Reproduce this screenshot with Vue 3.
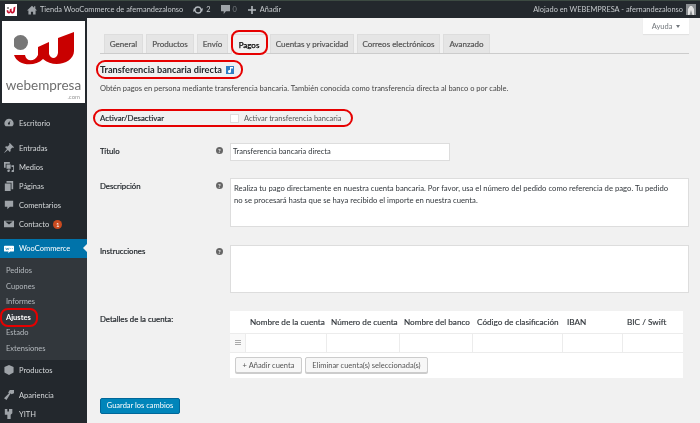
<script setup>
const tabs = [
  { label: 'General', w: 39 }, { label: 'Productos', w: 48 }, { label: 'Envío', w: 31 },
  { label: 'Pagos', w: 36, active: true }, { label: 'Cuentas y privacidad', w: 84 },
  { label: 'Correos electrónicos', w: 83 }, { label: 'Avanzado', w: 47 }
]
const columns = [
  { label: 'Nombre de la cuenta', w: 81 }, { label: 'Número de cuenta', w: 73 },
  { label: 'Nombre del banco', w: 73 }, { label: 'Código de clasificación', w: 90 },
  { label: 'IBAN', w: 60 }, { label: 'BIC / Swift', w: 61 }
]
const submenu = ['Pedidos', 'Cupones', 'Informes', 'Ajustes', 'Estado', 'Extensiones']
</script>

<template>
  <div class="page">
    <header class="bar">
      <div class="bar-left">
        <svg class="wlogo" width="12" height="12" viewBox="0 0 12 12"><rect width="12" height="12" fill="#fff"/><circle cx="3" cy="4" r="1.1" fill="#777"/><path d="M1.5 6.5c.5 3.5 3 3.5 4 1.7 1 1.8 4 1.8 4.4-1.2L10.500 2.500 8.500 3.500 8.200 7c-.3 1.200-1.500 1-1.600-.2V4.500L4.800 5.200 4.700 7.500C4 8.300 3.200 7.500 3.200 6Z" fill="#c8102e"/></svg>
        <svg class="ico home" width="10" height="10" viewBox="0 0 12 12"><path d="M6 1 0 6.500h1.700V11.500h3V8h2.600v3.500h3V6.500H12L10 4.600V1.500H8.500v1.700Z" fill="#9ea3a8"/></svg>
        <span class="bar-site">Tienda WooCommerce de afernandezalonso</span>
        <svg class="ico" width="10" height="10" viewBox="0 0 12 12"><path d="M6 1.500a4.500 4.500 0 0 1 4.200 2.900L12 4l-1 4-3-2 1-.4A3.200 3.200 0 0 0 3 5L1.500 4.300A4.500 4.500 0 0 1 6 1.500ZM6 10.500a4.500 4.500 0 0 1-4.200-2.900L0 8l1-4 3 2-1 .4A3.200 3.200 0 0 0 9 7l1.500.7A4.500 4.500 0 0 1 6 10.500Z" fill="#b4b9be"/></svg>
        <span class="bar-num">2</span>
        <svg class="ico bubble" width="9" height="9" viewBox="0 0 10 10"><path d="M0 0h10v7H5.500L3 10V7H0Z" fill="#9ea3a8"/></svg>
        <span class="bar-num dim">0</span>
        <svg class="plus" width="8" height="8" viewBox="0 0 8 8"><path d="M3.200 0h1.600v3.200H8v1.600H4.800V8H3.200V4.800H0V3.200h3.200Z" fill="#b4b9be"/></svg>
        <span class="bar-add">Añadir</span>
      </div>
      <div class="bar-right">
        <span>Alojado en WEBEMPRESA - afernandezalonso</span>
        <svg class="avatar" width="10" height="11" viewBox="0 0 10 11"><rect width="10" height="11" fill="#8b8f92"/><path d="M2 11V5l2-3h2l2 3v6H6.500L5 6 3.500 11Z" fill="#e3e3e3"/></svg>
      </div>
    </header>

    <div class="body">
      <aside class="side">
        <div class="logo">
          <svg class="logo-mark" width="60" height="33" viewBox="0 0 60 33">
            <path d="M0 23H11C12 30 21 30 24 23V15L35 10V22C37 28 43 27 44 21V6L60 0V19C60 31 40 37 29 27C20 36 3 33 0 23Z" fill="#c90000"/>
            <circle cx="6.500" cy="10.500" r="7.500" fill="#777"/>
          </svg>
          <div class="logo-name">webempresa</div>
          <div class="logo-com">.com</div>
        </div>
        <nav class="menu">
          <div class="mi first"><svg class="mi-ico" viewBox="0 0 12 12"><path d="M6 1a5.500 5.500 0 0 0-5 7.800L2 10h8l1-1.200A5.500 5.500 0 0 0 6 1Zm0 7a1.300 1.300 0 0 1-.5-2.500L8 3 6.800 5.800A1.300 1.300 0 0 1 6 8Z"/></svg>Escritorio</div>
          <div class="mi"><svg class="mi-ico" viewBox="0 0 12 12"><path d="M7 0l5 5-1 1-1-.5-2.200 2.200.2 2-1 1-2.300-2.300L1 11.500 0 12l.5-1 3.100-3.700L1.300 5l1-1 2 .2L6.500 2 6 1Z"/></svg>Entradas</div>
          <div class="mi"><svg class="mi-ico" viewBox="0 0 12 12"><path d="M0 0h7v2H2v5H0ZM3 3h5v5H3ZM9 4h3v7a1.500 1.500 0 1 1-1-1.400V6H9ZM4 9h3v1.500a1.500 1.500 0 1 1-1-1.400Z"/></svg>Medios</div>
          <div class="mi"><svg class="mi-ico" viewBox="0 0 12 12"><path d="M3 0h8v10H9V2H3ZM1 3h7v9H1Z"/></svg>Páginas</div>
          <div class="mi"><svg class="mi-ico" viewBox="0 0 12 12"><path d="M1 1h10v7H7l-3 3V8H1Z"/></svg>Comentarios</div>
          <div class="mi"><svg class="mi-ico" viewBox="0 0 12 12"><path d="M0 2h12v8H0Zm1.500 1L6 6.500 10.500 3Z" fill-rule="evenodd"/></svg>Contacto<span class="badge">1</span></div>
          <div class="mi woo"><svg class="mi-ico white" viewBox="0 0 12 12"><path d="M1 2h10a1 1 0 0 1 1 1v5a1 1 0 0 1-1 1H7.500L5 11l.5-2H1a1 1 0 0 1-1-1V3a1 1 0 0 1 1-1Z"/><path d="M2 4.500l1 2.500 1-2 1 2 1-2.500M7 5.500h1M9.500 5.500h1" fill="none" stroke="#0073aa" stroke-width=".7"/></svg>WooCommerce</div>
          <div class="sub">
            <div v-for="s in submenu" :key="s" class="sub-item" :class="{ on: s === 'Ajustes' }">{{ s }}</div>
            <span class="ring ring-ajustes"></span>
          </div>
          <div class="mi prod"><svg class="mi-ico" viewBox="0 0 12 12"><path d="M6 0l5.500 2.500v6.500L6 12 .5 9V2.500Z"/></svg>Productos</div>
          <div class="mi"><svg class="mi-ico" viewBox="0 0 12 12"><path d="M7 0h5v4L9 5 8 4 3 12 0 10l6-6-1-1Z"/></svg>Apariencia</div>
          <div class="mi"><svg class="mi-ico" viewBox="0 0 12 12"><path d="M1 0h3v3h2V0h4v5L8 7v5H4V7H1Z"/></svg>YITH</div>
        </nav>
      </aside>

      <main class="main">
        <div class="help">Ayuda <i class="caret"></i></div>
        <div class="tabs">
          <div v-for="t in tabs" :key="t.label" class="tab" :class="{ active: t.active }" :style="{ width: t.w + 'px' }">{{ t.label }}</div>
          <span class="ring ring-tab"></span>
        </div>

        <h2 class="title">Transferencia bancaria directa <span class="up"><svg width="5" height="6" viewBox="0 0 5 6"><path d="M2 0h3v1.500H3V4.500a1.500 1.500 0 1 1-1-1.400Z" fill="#fff"/></svg></span><span class="ring ring-title"></span></h2>
        <p class="intro">Obtén pagos en persona mediante transferencia bancaria. También conocida como transferencia directa al banco o por cable.</p>

        <div class="row row-toggle">
          <div class="lab">Activar/Desactivar</div>
          <div class="field check"><span class="box"></span>Activar transferencia bancaria</div>
          <span class="ring ring-row"></span>
        </div>
        <div class="row row-title">
          <div class="lab">Título<span class="q">?</span></div>
          <div class="input">Transferencia bancaria directa</div>
        </div>
        <div class="row row-desc">
          <div class="lab">Descripción<span class="q">?</span></div>
          <div class="area">Realiza tu pago directamente en nuestra cuenta bancaria. Por favor, usa el número del pedido como referencia de pago. Tu pedido no se procesará hasta que se haya recibido el importe en nuestra cuenta.</div>
        </div>
        <div class="row row-inst">
          <div class="lab">Instrucciones<span class="q">?</span></div>
          <div class="area tall"></div>
        </div>
        <div class="row row-acc">
          <div class="lab">Detalles de la cuenta:</div>
          <div class="table">
            <div class="thead">
              <div class="handle"></div>
              <div v-for="c in columns" :key="c.label" class="th" :style="{ width: c.w + 'px' }">{{ c.label }}</div>
            </div>
            <div class="tbody">
              <div class="handle grip"><i></i><i></i><i></i></div>
              <div v-for="c in columns" :key="c.label" class="td" :style="{ width: c.w + 'px' }"></div>
            </div>
            <div class="tfoot">
              <span class="btn add">+ Añadir cuenta</span>
              <span class="btn del">Eliminar cuenta(s) seleccionada(s)</span>
            </div>
          </div>
        </div>
        <div class="save">Guardar los cambios</div>
      </main>
    </div>
  </div>
</template>

<style>
html, body { margin: 0; background: #f1f1f1; overflow: hidden; }
</style>

<style scoped>
.page { width: 700px; height: 423px; overflow: hidden; font-family: Lato, "Open Sans", sans-serif; font-size: 7.500px; color: #444; background: #f1f1f1; display: flex; flex-direction: column; filter: blur(.3px); }
.bar { height: 18px; flex: none; background: #23282d; border-top: 1px solid #3c4a42; box-sizing: border-box; display: flex; justify-content: space-between; align-items: center; color: #c6cacd; padding: 0 4px 0 5px; font-size: 7.400px; }
.bar-left, .bar-right { display: flex; align-items: center; }
.wlogo { margin-right: 10px; }
.home { margin-right: 3px; }
.bar-site { margin-right: 10px; }
.bar-num { margin: 0 10px 0 3px; }
.dim { color: #777c80; margin-right: 11px; }
.plus { margin-right: 4px; }
.avatar { margin-left: 3px; }

.body { flex: 1; display: flex; min-height: 0; }
.side { width: 87px; flex: none; background: #23282d; padding-top: 3px; box-sizing: border-box; }
.logo { width: 83px; height: 82px; margin-left: 2px; background: #fff; box-sizing: border-box; padding-top: 11px; }
.logo-mark { display: block; margin-left: 12px; }
.logo-name { font: 400 13.500px/12px Lato, sans-serif; color: #6e6e6e; text-align: center; margin-top: 14px; }
.logo-com { font-size: 6px; line-height: 7px; color: #999; text-align: right; padding-right: 5px; margin-top: 2px; }
.menu { margin-top: 10.500px; }
.mi { height: 19px; display: flex; align-items: center; padding-left: 4px; box-sizing: border-box; color: #d5d8da; }
.mi-ico { width: 10px; height: 10px; fill: #9ea3a8; margin-right: 5px; flex: none; }
.mi-ico.white { fill: #fff; }
.mi.first { margin-bottom: 6px; }
.badge { width: 9px; height: 9px; border-radius: 50%; background: #ca4a1f; color: #fff; font-size: 6px; line-height: 9px; text-align: center; margin-left: 4px; }
.woo { margin-top: 5.500px; background: #0073aa; color: #fff; position: relative; }
.woo::after { content: ""; position: absolute; right: 0; top: 5px; border: 4px solid transparent; border-right-color: #f1f1f1; border-left-width: 0; }
.sub { position: relative; background: #32373c; padding: 5px 0 3.400px; }
.sub-item { height: 15.600px; line-height: 15.600px; padding-left: 6px; color: #b4b9be; }
.sub-item.on { color: #fff; font-weight: 700; }
.prod { margin-bottom: 6px; height: 20px; padding-top: 1px; }
.ring { position: absolute; border: 2px solid #e60000; box-sizing: border-box; pointer-events: none; }
.ring-ajustes { left: 0; top: 50px; width: 38px; height: 19px; border-radius: 8px; }

.main { flex: 1; position: relative; padding: 16px 11px 0 13px; min-width: 0; }
.help { position: absolute; top: 0; right: 11px; width: 46px; height: 16px; background: #fff; box-shadow: 0 1px 1px rgba(0,0,0,.06); color: #72777c; display: flex; align-items: center; justify-content: center; gap: 4px; box-sizing: border-box; }
.caret { border: 2.500px solid transparent; border-top: 3px solid #72777c; border-bottom: 0; }
.tabs { position: relative; display: flex; gap: 3px; height: 19px; border-bottom: 1px solid #ccc; padding-left: 4px; }
.tab { height: 19px; box-sizing: border-box; background: #e5e5e5; border: 1px solid #ddd; border-bottom: 0; color: #555; display: flex; align-items: center; justify-content: center; white-space: nowrap; font-size: 8px; -webkit-text-stroke: .2px #555; }
.tab.active { background: #f1f1f1; color: #000; height: 20px; -webkit-text-stroke: .25px #000; }
.ring-tab { left: 131px; top: -4px; width: 37px; height: 25px; border-radius: 8px; }
.title { position: relative; margin: 9px 0 0 0; font-size: 9.200px; line-height: 13px; font-weight: 700; color: #23282d; display: flex; align-items: center; gap: 4px; white-space: nowrap; }
.up { width: 8px; height: 8px; background: #2f7fc4; display: flex; align-items: center; justify-content: center; }
.ring-title { left: -4px; top: -3px; width: 147px; height: 19px; border-radius: 9px; }
.intro { margin: 7px 0 0; line-height: 12px; color: #444; white-space: nowrap; }
.row { display: flex; position: relative; align-items: flex-start; }
.lab { width: 130px; flex: none; color: #23282d; position: relative; line-height: 11px; margin-top: 3px; font-size: 7.800px; -webkit-text-stroke: .2px #23282d; }
.q { position: absolute; right: 7px; top: 1.500px; width: 7px; height: 7px; border-radius: 50%; background: #666; color: #f1f1f1; font-size: 6px; line-height: 7px; text-align: center; font-weight: 700; -webkit-text-stroke: 0; }
.row-toggle { margin-top: 17.500px; height: 11px; align-items: center; }
.row-toggle .lab { margin-top: 0; }
.check { display: flex; align-items: center; gap: 5px; color: #555; }
.box { width: 7px; height: 7px; background: #fff; border: 1px solid #ddd; display: block; }
.ring-row { left: -7px; top: -3.500px; width: 260px; height: 18px; border-radius: 9px; }
.row-title { margin-top: 19px; }
.input { width: 220px; height: 18px; box-sizing: border-box; background: #fff; border: 1px solid #ddd; padding: 0 2px; display: flex; align-items: center; color: #32373c; }
.row-desc { margin-top: 17px; }
.area { flex: 1; height: 49px; box-sizing: border-box; background: #fff; border: 1px solid #ddd; padding: 3px 10px 3px 3px; font-size: 7.700px; line-height: 12px; color: #32373c; }
.area.tall { height: 48px; }
.row-inst { margin-top: 18px; }
.row-inst .lab { margin-top: 1.500px; }
.row-acc { margin-top: 18px; }
.row-acc .lab { margin-top: 3px; }
.table { width: 453px; background: #fff; }
.thead, .tbody { display: flex; }
.thead { height: 22px; border-bottom: 1px solid #ececec; }
.tbody { height: 18px; border-bottom: 1px solid #ececec; }
.handle { width: 15px; flex: none; }
.grip { background: #f9f9f9; display: flex; flex-direction: column; align-items: center; justify-content: center; gap: 1px; }
.grip i { display: block; width: 6px; height: 1px; background: #aaa; }
.th { box-sizing: border-box; padding-left: 5px; display: flex; align-items: center; white-space: nowrap; color: #32373c; font-size: 8.200px; -webkit-text-stroke: .15px #32373c; }
.td { box-sizing: border-box; border-left: 1px solid #ececec; }
.tfoot { height: 25px; display: flex; align-items: center; gap: 3px; padding-left: 5px; }
.btn { height: 16px; box-sizing: border-box; background: #f7f7f7; border: 1px solid #ccc; border-radius: 2px; box-shadow: 0 1px 0 #ccc; color: #555; display: flex; align-items: center; justify-content: center; white-space: nowrap; }
.add { width: 67px; }
.del { width: 123px; }
.save { margin-top: 20px; width: 80px; height: 16px; background: #0085ba; border: 1px solid #006799; box-sizing: border-box; border-radius: 2px; color: #fff; display: flex; align-items: center; justify-content: center; }
</style>
